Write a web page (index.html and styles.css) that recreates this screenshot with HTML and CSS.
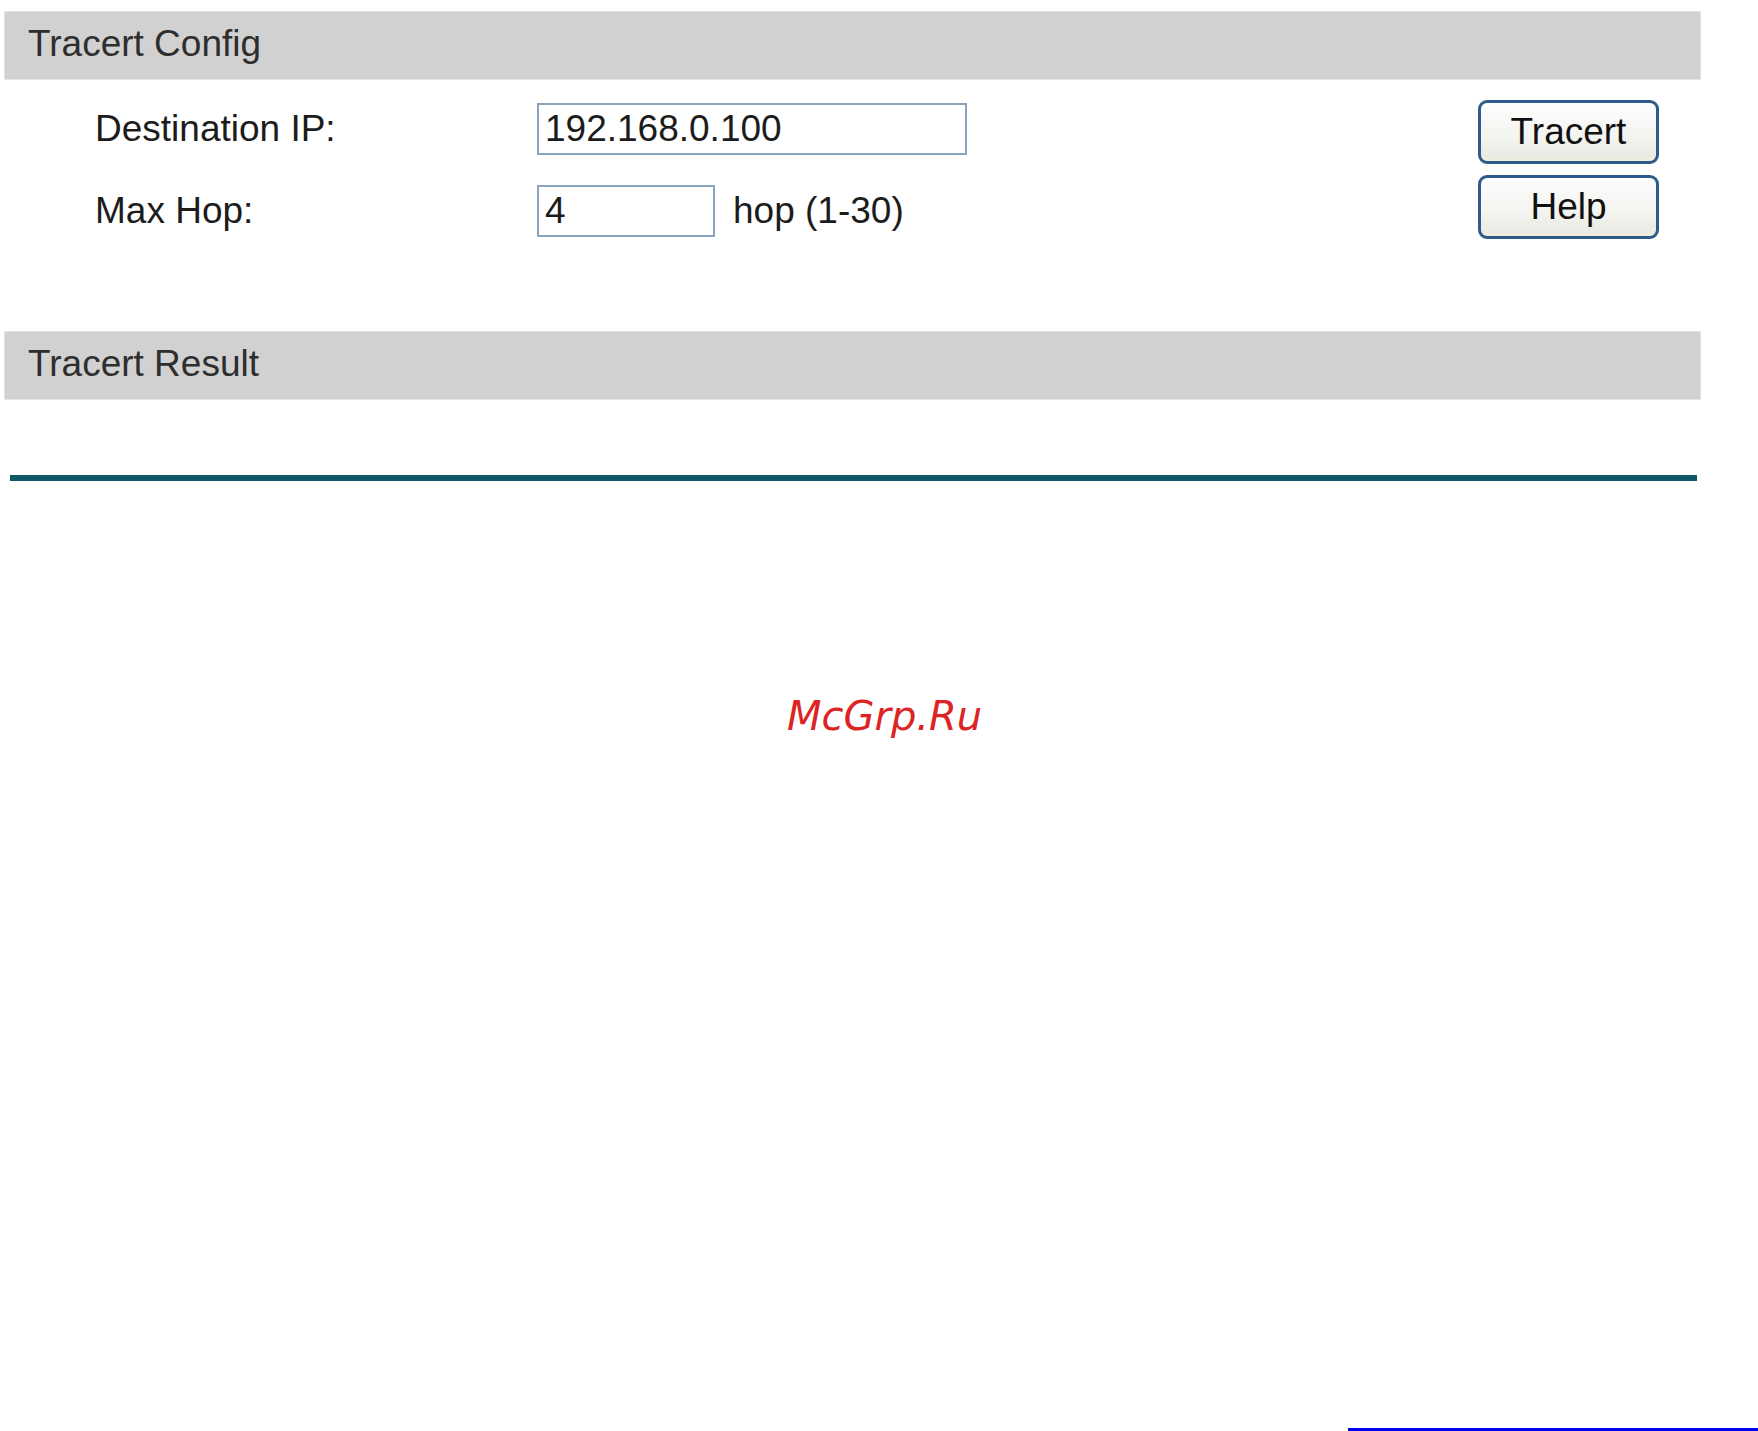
FILE: index.html
```html
<!DOCTYPE html>
<html>
<head>
<meta charset="utf-8">
<title>Tracert</title>
<link rel="stylesheet" href="styles.css">
</head>
<body>
<div class="page">
  <div class="bar">Tracert Config</div>
  <div class="config">
    <div class="fields">
      <div class="row">
        <span class="label">Destination IP:</span>
        <input class="field field-ip" type="text" value="192.168.0.100">
      </div>
      <div class="row">
        <span class="label">Max Hop:</span>
        <input class="field field-hop" type="text" value="4">
        <span class="unit">hop (1-30)</span>
      </div>
    </div>
    <div class="buttons">
      <button class="btn" type="button">Tracert</button>
      <button class="btn" type="button">Help</button>
    </div>
  </div>
  <div class="bar">Tracert Result</div>
  <div class="result"></div>
  <div class="rule"></div>
</div>
<div class="footer-line"></div>
<div class="watermark">McGrp.Ru</div>
</body>
</html>
```

FILE: styles.css
```css
html, body {
  margin: 0;
  padding: 0;
  background: #ffffff;
}
body {
  font-family: "Liberation Sans", Arial, sans-serif;
  font-size: 37px;
  color: #1c1c1c;
  position: relative;
  width: 1758px;
  height: 1431px;
  overflow: hidden;
}
.page {
  padding-top: 11px;
  padding-left: 4px;
  width: 1697px;
}
.bar {
  background: #d1d1d1;
  border: 1px solid #e4e4e4;
  line-height: 63px;
  padding-bottom: 4px;
  padding-left: 23px;
  color: #2e2e2e;
}
.config {
  display: flex;
  justify-content: space-between;
  align-items: flex-start;
  padding: 20px 42px 92px 91px;
}
.fields {
  display: flex;
  flex-direction: column;
  gap: 30px;
  padding-top: 3px;
}
.row {
  display: flex;
  align-items: center;
  height: 52px;
}
.label {
  width: 442px;
}
.field {
  box-sizing: border-box;
  height: 52px;
  border: 2px solid #8aa3be;
  padding: 0 6px;
  margin: 0;
  font-family: "Liberation Sans", Arial, sans-serif;
  font-size: 37px;
  color: #1c1c1c;
  background: #ffffff;
  outline: none;
}
.field-ip {
  width: 430px;
}
.field-hop {
  width: 178px;
}
.unit {
  margin-left: 18px;
}
.buttons {
  display: flex;
  flex-direction: column;
  gap: 11px;
}
.btn {
  box-sizing: border-box;
  width: 181px;
  height: 64px;
  border: 3px solid #2d5c8c;
  border-radius: 9px;
  background: linear-gradient(#fdfdfd 0%, #f4f4f1 55%, #e9e9e2 100%);
  box-shadow: inset 0 -7px 0 -4px #efeedd;
  font-family: "Liberation Sans", Arial, sans-serif;
  font-size: 37px;
  color: #111111;
  padding: 0;
  margin: 0;
}
.result {
  height: 75px;
}
.rule {
  margin-left: 6px;
  width: 1687px;
  height: 6px;
  background: #0d5969;
}
.footer-line {
  margin-top: 947px;
  margin-left: 1348px;
  height: 3px;
  background: #0000f0;
}
.watermark {
  position: absolute;
  left: 787px;
  top: 693px;
  font-family: "DejaVu Sans", sans-serif;
  font-style: italic;
  font-size: 40px;
  line-height: 1.164;
  color: #dd2424;
}
```
